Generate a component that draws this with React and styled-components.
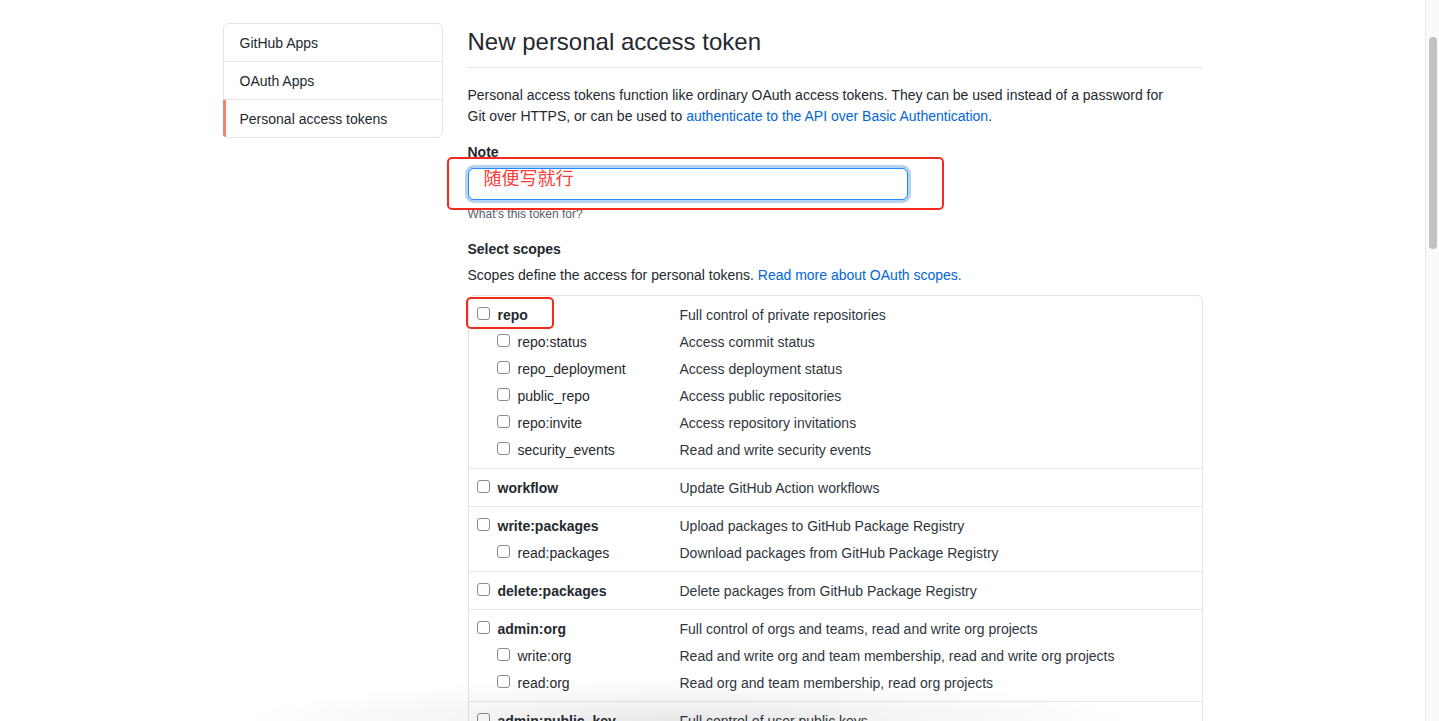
import React from "react";
import styled, { createGlobalStyle } from "styled-components";

const GlobalStyle = createGlobalStyle`
  html, body {
    margin: 0;
    padding: 0;
    height: 721px;
    overflow: hidden;
    background: #fff;
    font-family: "Liberation Sans", Arial, sans-serif;
    color: #24292e;
  }
`;

const Frame = styled.div`
  display: flex;
  height: 721px;
  overflow: hidden;
`;

const Viewport = styled.div`
  flex: 1;
  position: relative;
  overflow: hidden;
`;

const Layout = styled.div`
  width: 980px;
  margin: 0 auto;
  padding-top: 23px;
  display: flex;
  align-items: flex-start;
  gap: 25px;
`;

const Menu = styled.nav`
  width: 220px;
  flex: none;
  box-sizing: border-box;
  border: 1px solid #e1e4e8;
  border-radius: 6px;
  font-size: 14px;
`;

const MenuItem = styled.div`
  position: relative;
  padding: 9px 16px 7px;
  line-height: 21px;
  color: #24292e;
  border-top: ${(p) => (p.$first ? "none" : "1px solid #e1e4e8")};

  &::before {
    content: "";
    display: ${(p) => (p.$active ? "block" : "none")};
    position: absolute;
    left: -1px;
    top: 0;
    bottom: 0;
    width: 3px;
    background: #f9826c;
    border-bottom-left-radius: ${(p) => (p.$last ? "6px" : "0")};
  }
`;

const Main = styled.main`
  flex: 1;
  min-width: 0;
  font-size: 14px;
`;

const Heading = styled.h2`
  margin: 1px 0 17px;
  padding-bottom: 7px;
  border-bottom: 1px solid #e1e4e8;
  font-size: 24px;
  font-weight: 400;
  line-height: 36px;
  color: #24292e;
`;

const Para = styled.p`
  margin: 0;
  line-height: 21px;
  color: #24292e;
`;

const Link = styled.a`
  color: #0366d6;
  text-decoration: none;
`;

const NoteField = styled.div`
  position: relative;
  margin-top: 15px;
`;

const Label = styled.div`
  font-weight: 700;
  line-height: 21px;
  color: #24292e;
`;

const InputWrap = styled.div`
  position: relative;
  margin-top: 5px;
  width: 440px;
`;

const Input = styled.div`
  box-sizing: border-box;
  height: 32px;
  border: 1px solid #2188ff;
  border-radius: 6px;
  box-shadow: 0 0 0 3px rgba(3, 102, 214, 0.3);
  background: #fff;
`;

const Scribble = styled.span`
  position: absolute;
  left: 16px;
  top: -2px;
  font-family: "Noto Sans CJK SC", "Liberation Sans", sans-serif;
  font-size: 18px;
  line-height: 22px;
  color: #fb3b36;
`;

const Hint = styled.div`
  margin-top: 6px;
  font-size: 12px;
  line-height: 16px;
  color: #586069;
`;

const Callout = styled.div`
  position: absolute;
  left: ${(p) => p.$x}px;
  top: ${(p) => p.$y}px;
  width: ${(p) => p.$w}px;
  height: ${(p) => p.$h}px;
  box-sizing: border-box;
  border: 2px solid #f52a1f;
  border-radius: 5px;
  pointer-events: none;
`;

const ScopeSection = styled.div`
  margin-top: 17px;
`;

const ScopeIntro = styled(Para)`
  margin-top: 5px;
`;

const ScopeTable = styled.div`
  position: relative;
  margin-top: 9px;
  border: 1px solid #e1e4e8;
  border-radius: 6px;
`;

const Group = styled.div`
  padding: 5px 8px;
  border-top: ${(p) => (p.$first ? "none" : "1px solid #e1e4e8")};
`;

const Row = styled.div`
  display: grid;
  grid-template-columns: 203px 1fr;
  align-items: center;
  height: 27px;
`;

const ScopeName = styled.label`
  display: flex;
  align-items: center;
  gap: 8px;
  padding-left: ${(p) => (p.$child ? "20px" : "0")};
  font-weight: ${(p) => (p.$child ? 400 : 700)};
  color: #24292e;
`;

const Box = styled.span`
  width: 13px;
  height: 13px;
  box-sizing: border-box;
  border: 1px solid #8b8b8b;
  border-radius: 3px;
  background: #fff;
  margin-top: -2px;
`;

const Desc = styled.span`
  color: #2f363d;
`;

const DockShade = styled.div`
  position: absolute;
  left: 240px;
  right: 290px;
  bottom: 0;
  height: 44px;
  pointer-events: none;
  background: radial-gradient(
    ellipse 50% 100% at 50% 100%,
    rgba(0, 0, 0, 0.09),
    rgba(0, 0, 0, 0.03) 60%,
    rgba(0, 0, 0, 0) 100%
  );
`;

const Scrollbar = styled.div`
  width: 14px;
  flex: none;
  box-sizing: border-box;
  background: #fafafa;
  border-left: 1px solid #e8e8e8;
  padding: 37px 2px 0 3px;
`;

const Thumb = styled.div`
  height: 212px;
  border-radius: 4px;
  background: #c1c1c1;
`;

const scopes = [
  [
    ["repo", "Full control of private repositories"],
    ["repo:status", "Access commit status"],
    ["repo_deployment", "Access deployment status"],
    ["public_repo", "Access public repositories"],
    ["repo:invite", "Access repository invitations"],
    ["security_events", "Read and write security events"],
  ],
  [["workflow", "Update GitHub Action workflows"]],
  [
    ["write:packages", "Upload packages to GitHub Package Registry"],
    ["read:packages", "Download packages from GitHub Package Registry"],
  ],
  [["delete:packages", "Delete packages from GitHub Package Registry"]],
  [
    ["admin:org", "Full control of orgs and teams, read and write org projects"],
    ["write:org", "Read and write org and team membership, read and write org projects"],
    ["read:org", "Read org and team membership, read org projects"],
  ],
  [
    ["admin:public_key", "Full control of user public keys"],
    ["write:public_key", "Write user public keys"],
    ["read:public_key", "Read user public keys"],
  ],
];

const menu = ["GitHub Apps", "OAuth Apps", "Personal access tokens"];

export default function App() {
  return (
    <>
      <GlobalStyle />
      <Frame>
        <Viewport>
          <Layout>
            <Menu>
              {menu.map((m, i) => (
                <MenuItem
                  key={m}
                  $first={i === 0}
                  $last={i === menu.length - 1}
                  $active={i === menu.length - 1}
                >
                  {m}
                </MenuItem>
              ))}
            </Menu>

            <Main>
              <Heading>New personal access token</Heading>
              <Para>
                Personal access tokens function like ordinary OAuth access tokens. They can be used
                instead of a password for
                <br />
                Git over HTTPS, or can be used to{" "}
                <Link href="#">authenticate to the API over Basic Authentication</Link>.
              </Para>

              <NoteField>
                <Label>Note</Label>
                <InputWrap>
                  <Input />
                  <Scribble>随便写就行</Scribble>
                </InputWrap>
                <Hint>What’s this token for?</Hint>
                <Callout $x={-21} $y={15} $w={497} $h={53} />
              </NoteField>

              <ScopeSection>
                <Label>Select scopes</Label>
                <ScopeIntro>
                  Scopes define the access for personal tokens.{" "}
                  <Link href="#">Read more about OAuth scopes.</Link>
                </ScopeIntro>
                <ScopeTable>
                  {scopes.map((group, gi) => (
                    <Group key={gi} $first={gi === 0}>
                      {group.map(([name, desc], ri) => (
                        <Row key={name}>
                          <ScopeName $child={ri > 0}>
                            <Box />
                            {name}
                          </ScopeName>
                          <Desc>{desc}</Desc>
                        </Row>
                      ))}
                    </Group>
                  ))}
                  <Callout $x={-3} $y={1} $w={88} $h={32} />
                </ScopeTable>
              </ScopeSection>
            </Main>
          </Layout>
          <DockShade />
        </Viewport>
        <Scrollbar>
          <Thumb />
        </Scrollbar>
      </Frame>
    </>
  );
}
